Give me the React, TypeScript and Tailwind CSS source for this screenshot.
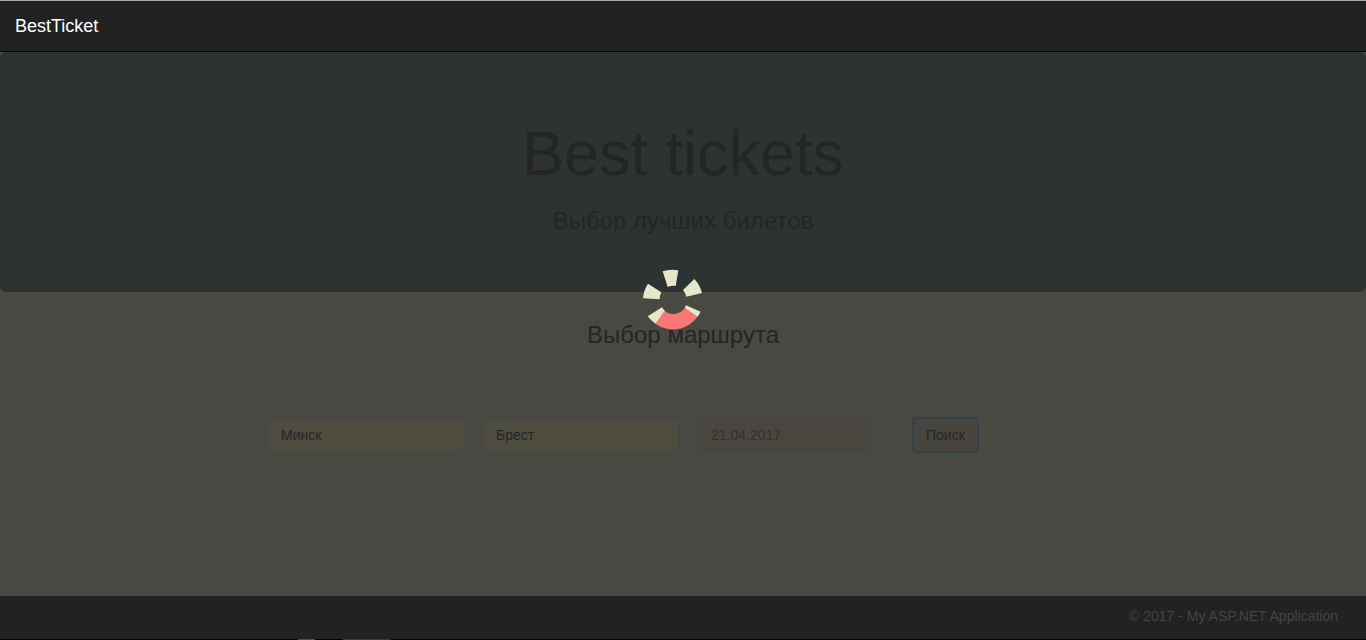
import React from "react";

function Spinner() {
  return (
    <div role="status" aria-label="Loading" className="fixed left-1/2 top-1/2 z-20 -ml-[53px] -mt-[65px]">
      <svg width="90" height="90" viewBox="0 0 270 270" aria-hidden="true">
        <g fill="#e6e7c9">
          <path d="M98 49A90 90 0 0 1 145 46L137 93A42 42 0 0 0 113 96Z" />
          <path d="M193 72A90 90 0 0 1 216 114L169 125A42 42 0 0 0 159 105Z" />
          <path d="M54 86L94 112A42 42 0 0 0 89 133L39 130A90 90 0 0 1 54 86Z" />
          <path d="M96 157A42 42 0 0 0 106 169L78 207A90 90 0 0 1 53 184Z" />
          <path d="M168 151L212 170A90 90 0 0 1 202 186L164 159Z" />
        </g>
        <path fill="#fb7777" d="M103 168A43 43 0 0 0 165 158L202 186A90 90 0 0 1 76 206Z" />
      </svg>
    </div>
  );
}

const field = "h-[34px] rounded border px-3 text-sm outline-none";

export default function App() {
  return (
    <div className="flex min-h-screen flex-col bg-[#484942] font-['Liberation_Sans',Arial,sans-serif] text-[#252525]">
      <header className="flex h-[52px] items-center border-b border-t border-b-[#080808] border-t-[#a5aaaa] bg-[#222222] px-[15px]">
        <a href="#" className="text-lg leading-5 text-white">BestTicket</a>
      </header>

      <main className="flex flex-1 flex-col">
        <section className="rounded-md bg-[#2d3333] pb-[55px] pt-[66px] text-center">
          <h1 className="text-[63px] leading-[70px]">Best tickets</h1>
          <p className="mt-4 text-2xl leading-[33px]">Выбор лучших билетов</p>
        </section>

        <h2 className="mt-[30px] text-center text-2xl leading-[26px]">Выбор маршрута</h2>

        <form className="mx-auto mb-28 mt-[69px] flex w-full max-w-[830px] items-center gap-[19px]" onSubmit={(e) => e.preventDefault()}>
          <input aria-label="Откуда" defaultValue="Минск" className={`${field} w-[196px] border-[#464846] bg-[#4d4c3f]`} />
          <input aria-label="Куда" defaultValue="Брест" className={`${field} w-[196px] border-[#464846] bg-[#4d4c3f]`} />
          <input aria-label="Дата" defaultValue="21.04.2017" className={`${field} w-[172px] border-[#484540] bg-[#4a453e] text-[#33322f]`} />
          <button type="submit" className="ml-[23px] h-9 rounded border-2 border-[#34404c] bg-[#484541] px-3 text-sm">Поиск</button>
        </form>
      </main>

      <footer className="bg-[#222222]">
        <p className="px-7 pb-[13px] pt-[10px] text-right text-sm leading-5 text-[#444540]">© 2017 - My ASP.NET Application</p>
        <div className="flex h-px bg-black pl-[298px]">
          <span className="w-[17px] bg-[#57561d]" />
          <span className="ml-7 w-12 bg-[#39383a]" />
        </div>
      </footer>
      <Spinner />
    </div>
  );
}
